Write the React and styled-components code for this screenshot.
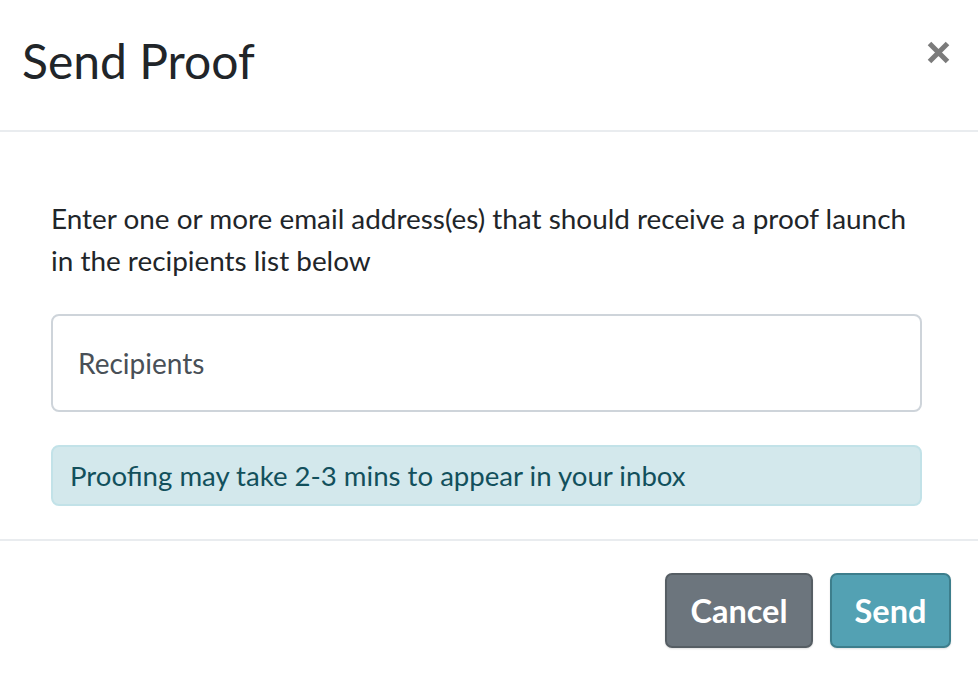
import React from "react";
import styled, { createGlobalStyle } from "styled-components";

const GlobalStyle = createGlobalStyle`
  html, body {
    margin: 0;
    padding: 0;
    background: #ffffff;
  }
  body {
    font-family: Lato, "Open Sans", sans-serif;
    color: #212529;
  }
`;

const Modal = styled.div`
  width: 978px;
  height: 676px;
  display: flex;
  flex-direction: column;
  background: #ffffff;
  overflow: hidden;
`;

const Header = styled.div`
  height: 130px;
  box-sizing: content-box;
  display: flex;
  justify-content: space-between;
  align-items: flex-start;
  padding: 0 28px 0 22px;
  border-bottom: 2px solid #e9ecef;
`;

const Title = styled.h1`
  margin: 0;
  padding-top: 32px;
  font-size: 48px;
  font-weight: 400;
  line-height: 1.2;
  color: #212529;
`;

const CloseButton = styled.button`
  margin-top: 41px;
  padding: 0;
  border: none;
  background: none;
  cursor: pointer;
  width: 23px;
  height: 23px;
  display: flex;
`;

const Body = styled.div`
  padding: 65px 56px 33px 51px;
  display: flex;
  flex-direction: column;
  gap: 33px;
`;

const Intro = styled.p`
  margin: 0;
  font-size: 27.9px;
  line-height: 42px;
  color: #212529;
`;

const RecipientsInput = styled.input`
  height: 98px;
  box-sizing: border-box;
  width: 100%;
  border: 2px solid #ced4da;
  border-radius: 8px;
  padding: 0 25px;
  font-family: Lato, "Open Sans", sans-serif;
  font-size: 28px;
  color: #495057;
  outline: none;

  &::placeholder {
    color: #495057;
    opacity: 1;
  }
`;

const Alert = styled.div`
  height: 61px;
  box-sizing: border-box;
  display: flex;
  align-items: center;
  padding: 0 17px;
  background: #d3e8ec;
  border: 2px solid #c2e2e8;
  border-radius: 8px;
  font-size: 27.6px;
  color: #12505c;
`;

const Footer = styled.div`
  border-top: 2px solid #e9ecef;
  display: flex;
  justify-content: flex-end;
  gap: 17px;
  padding: 32px 27px 0 0;
`;

const Button = styled.button`
  height: 75px;
  box-sizing: border-box;
  width: ${(p) => p.$w}px;
  padding: 0;
  border-radius: 7px;
  border: 2px solid ${(p) => p.$border};
  background: ${(p) => p.$bg};
  color: #ffffff;
  font-family: Lato, "Open Sans", sans-serif;
  font-weight: 700;
  font-size: 32.5px;
  cursor: pointer;
  box-shadow: 0 1px 2px rgba(0, 0, 0, 0.12);
`;

const CloseIcon = () => (
  <svg width="23" height="23" viewBox="0 0 23 23">
    <path
      d="M2.5 2.5 L20.5 20.5 M20.5 2.5 L2.5 20.5"
      stroke="#7b7b7b"
      strokeWidth="5"
      strokeLinecap="butt"
    />
  </svg>
);

export default function App() {
  return (
    <>
      <GlobalStyle />
      <Modal>
        <Header>
          <Title>Send Proof</Title>
          <CloseButton aria-label="Close">
            <CloseIcon />
          </CloseButton>
        </Header>
        <Body>
          <Intro>
            Enter one or more email address(es) that should receive a proof launch in the
            recipients list below
          </Intro>
          <RecipientsInput placeholder="Recipients" />
          <Alert>Proofing may take 2-3 mins to appear in your inbox</Alert>
        </Body>
        <Footer>
          <Button $bg="#6c757d" $border="#565e64" $w={148}>
            Cancel
          </Button>
          <Button $bg="#53a1b3" $border="#3d7e8c" $w={121}>
            Send
          </Button>
        </Footer>
      </Modal>
    </>
  );
}
